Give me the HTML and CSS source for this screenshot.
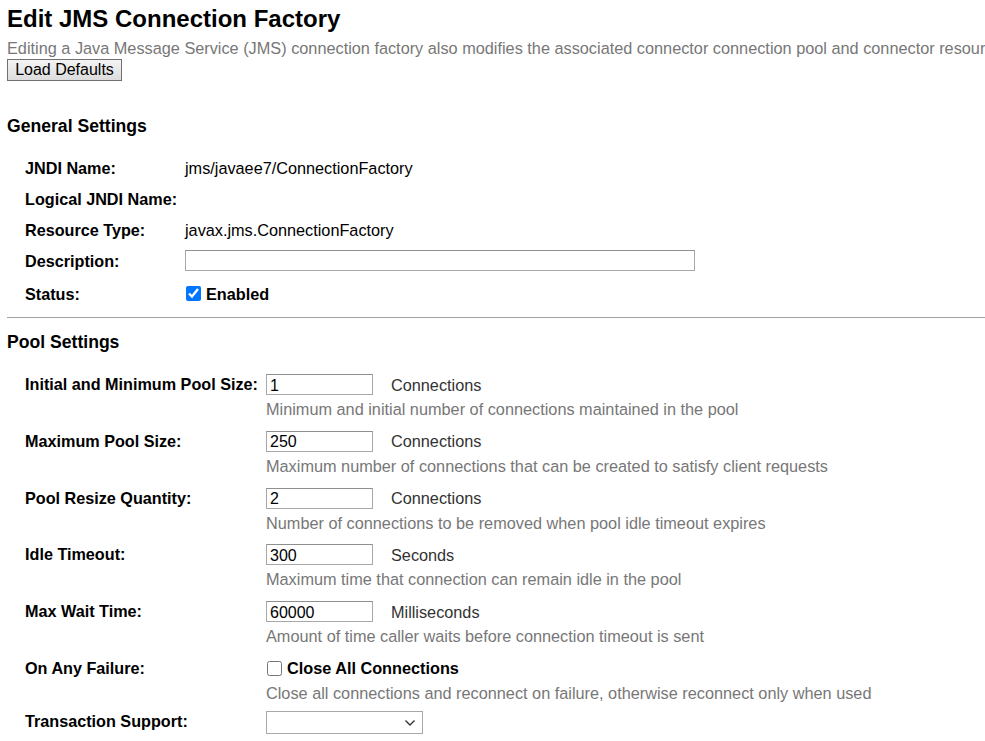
FILE: index.html
```html
<!DOCTYPE html>
<html lang="en">
<head>
<meta charset="utf-8">
<title>Edit JMS Connection Factory</title>
<link rel="stylesheet" href="styles.css">
</head>
<body>
<div class="page">
  <h1 class="title">Edit JMS Connection Factory</h1>
  <p class="intro">Editing a Java Message Service (JMS) connection factory also modifies the associated connector connection pool and connector resource.</p>
  <button class="btn" type="button">Load Defaults</button>

  <h2 class="section general-title">General Settings</h2>
  <div class="props general">
    <div class="row"><div class="label">JNDI Name:</div><div class="value">jms/javaee7/ConnectionFactory</div></div>
    <div class="row"><div class="label">Logical JNDI Name:</div><div class="value"></div></div>
    <div class="row"><div class="label">Resource Type:</div><div class="value">javax.jms.ConnectionFactory</div></div>
    <div class="row"><div class="label">Description:</div><div class="value"><input class="field wide" type="text"></div></div>
    <div class="row status"><div class="label">Status:</div><div class="value"><label class="check"><input type="checkbox" checked><span>Enabled</span></label></div></div>
  </div>

  <hr class="rule">

  <h2 class="section pool-title">Pool Settings</h2>
  <div class="props pool">
    <div class="row">
      <div class="label">Initial and Minimum Pool Size:</div>
      <div class="value">
        <div class="inline"><input class="field num" type="text" value="1"><span class="unit">Connections</span></div>
        <div class="help">Minimum and initial number of connections maintained in the pool</div>
      </div>
    </div>
    <div class="row">
      <div class="label">Maximum Pool Size:</div>
      <div class="value">
        <div class="inline"><input class="field num" type="text" value="250"><span class="unit">Connections</span></div>
        <div class="help">Maximum number of connections that can be created to satisfy client requests</div>
      </div>
    </div>
    <div class="row">
      <div class="label">Pool Resize Quantity:</div>
      <div class="value">
        <div class="inline"><input class="field num" type="text" value="2"><span class="unit">Connections</span></div>
        <div class="help">Number of connections to be removed when pool idle timeout expires</div>
      </div>
    </div>
    <div class="row">
      <div class="label">Idle Timeout:</div>
      <div class="value">
        <div class="inline"><input class="field num" type="text" value="300"><span class="unit">Seconds</span></div>
        <div class="help">Maximum time that connection can remain idle in the pool</div>
      </div>
    </div>
    <div class="row">
      <div class="label">Max Wait Time:</div>
      <div class="value">
        <div class="inline"><input class="field num" type="text" value="60000"><span class="unit">Milliseconds</span></div>
        <div class="help">Amount of time caller waits before connection timeout is sent</div>
      </div>
    </div>
    <div class="row short">
      <div class="label">On Any Failure:</div>
      <div class="value">
        <label class="check plain"><input type="checkbox"><span>Close All Connections</span></label>
        <div class="help">Close all connections and reconnect on failure, otherwise reconnect only when used</div>
      </div>
    </div>
    <div class="row">
      <div class="label">Transaction Support:</div>
      <div class="value">
        <div class="select">
          <select class="sel"><option></option></select>
          <svg class="chev" width="12" height="8" viewBox="0 0 12 8"><path d="M1.5 1.5 L6 6 L10.5 1.5" fill="none" stroke="#333" stroke-width="1.4"/></svg>
        </div>
      </div>
    </div>
  </div>
</div>
</body>
</html>
```
FILE: styles.css
```css
html, body {
  margin: 0;
  padding: 0;
  overflow: hidden;
  background: #fff;
}
body {
  font-family: "Liberation Sans", Arial, sans-serif;
  color: #000;
  font-size: 16.25px;
}
.page {
  padding: 0 0 0 7px;
}
.title {
  margin: 0;
  padding-top: 5px;
  font-size: 24px;
  line-height: 28px;
  font-weight: bold;
}
.intro {
  margin: 6px 0 0 0;
  white-space: nowrap;
  color: #777;
  font-size: 16.3px;
  line-height: 18px;
}
.btn {
  display: block;
  margin: 2px 0 0 0;
  width: 115px;
  height: 22px;
  padding: 0;
  font-family: "Liberation Sans", Arial, sans-serif;
  font-size: 16px;
  color: #000;
  border: 1px solid #707070;
  border-radius: 0;
  background: linear-gradient(#f4f4f4, #dcdcdc);
}
.section {
  margin: 0;
  font-size: 17.6px;
  line-height: 20px;
  font-weight: bold;
}
.general-title {
  padding-top: 35px;
}
.pool-title {
  padding-top: 14px;
}
.props {
  display: flex;
  flex-direction: column;
}
.row {
  display: grid;
  padding-left: 18px;
}
.general {
  margin-top: 16px;
}
.general .row {
  grid-template-columns: 160px 1fr;
  min-height: 31px;
  align-items: center;
}
.general .row.status {
  min-height: 35px;
}
.pool {
  margin-top: 22px;
}
.pool .row {
  grid-template-columns: 241px 1fr;
  align-items: start;
  min-height: 56.75px;
}
.pool .row.short {
  min-height: 53px;
}
.label {
  font-weight: bold;
  font-size: 16.2px;
  line-height: 20px;
}
.value {
  font-size: 16.25px;
  line-height: 20px;
}
.field {
  font-family: "Liberation Sans", Arial, sans-serif;
  font-size: 16px;
  height: 21px;
  box-sizing: border-box;
  border: 1px solid #a8a8a8;
  border-top-color: #8f8f8f;
  padding: 2px 3px 0 3px;
  margin: 0;
  color: #000;
}
.wide {
  width: 510px;
}
.num {
  width: 107px;
}
.inline {
  display: flex;
  align-items: center;
  gap: 18px;
  height: 21px;
}
.unit {
  color: #333;
}
.help {
  color: #777;
  font-size: 16.3px;
  margin-top: 4px;
}
.check {
  display: flex;
  align-items: center;
  gap: 5px;
  font-weight: bold;
  height: 21px;
}
.check input {
  width: 15px;
  height: 15px;
  margin: 0 0 0 1px;
  accent-color: #0075ff;
}
.rule {
  margin: 6px 0 0 0;
  border: 0;
  border-top: 1px solid #a0a0a0;
  height: 0;
}
.select {
  position: relative;
  width: 157px;
  height: 23px;
}
.sel {
  appearance: none;
  -webkit-appearance: none;
  width: 157px;
  height: 23px;
  border: 1px solid #a8a8a8;
  border-radius: 0;
  background: #fff;
  margin: 0;
}
.chev {
  position: absolute;
  right: 7px;
  top: 8px;
  pointer-events: none;
}
```
